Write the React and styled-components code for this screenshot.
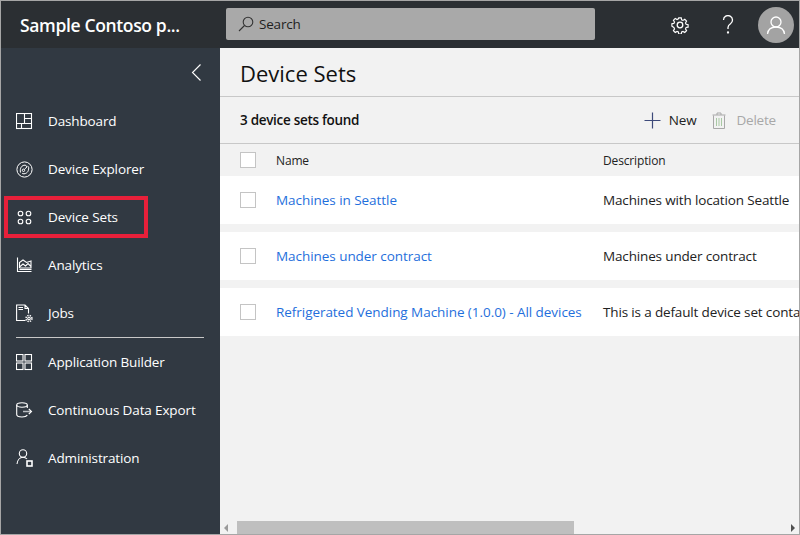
import React from 'react'
import styled, { createGlobalStyle } from 'styled-components'

const GlobalStyle = createGlobalStyle`
  html, body { margin: 0; padding: 0; height: 100%; overflow: hidden; }
  body { font-family: "Open Sans", "Noto Sans", sans-serif; background: #f2f2f2; }
  #root { height: 100%; }
`

const Page = styled.div`
  box-sizing: border-box;
  width: 800px;
  height: 535px;
  border: 1px solid #a6a6a6;
  display: flex;
  flex-direction: column;
  overflow: hidden;
`
const TopBar = styled.header`
  height: 47px;
  flex: none;
  background: #2b2f33;
  display: flex;
  align-items: center;
`
const Brand = styled.div`
  width: 225px;
  flex: none;
  box-sizing: border-box;
  padding-left: 19px;
  color: #fff;
  font-size: 17.5px;
  font-weight: 600;
  letter-spacing: -0.35px;
  white-space: nowrap;
`
const SearchBox = styled.div`
  width: 369px;
  height: 32px;
  margin-top: -1px;
  flex: none;
  background: #a9a9a9;
  border-radius: 2px;
  display: flex;
  align-items: center;
  gap: 5px;
  padding-left: 12px;
  padding-bottom: 1px;
  box-sizing: border-box;
  color: #1f1f1f;
  font-size: 13.5px;
  letter-spacing: -0.2px;
`
const TopIcons = styled.div`
  flex: 1;
  display: flex;
  align-items: center;
  justify-content: flex-end;
  padding-right: 5px;
`
const TopIcon = styled.button`
  all: unset;
  width: 48px;
  height: 47px;
  display: flex;
  align-items: center;
  justify-content: center;
`
const Avatar = styled.div`
  width: 36px;
  height: 36px;
  margin-left: 6px;
  border-radius: 50%;
  background: #a3a3a3;
  display: flex;
  align-items: center;
  justify-content: center;
`
const Body = styled.div`
  flex: 1;
  display: flex;
  min-height: 0;
`
const Sidebar = styled.nav`
  width: 219px;
  flex: none;
  background: #313942;
  position: relative;
`
const Collapse = styled.div`
  height: 49px;
  display: flex;
  align-items: center;
  justify-content: flex-end;
  padding-right: 18px;
`
const NavItem = styled.div`
  height: 48px;
  display: flex;
  align-items: center;
  gap: 15px;
  padding-left: 15px;
  color: #fff;
  font-size: 13.5px;
  letter-spacing: -0.13px;
  white-space: nowrap;
`
const NavIcon = styled.span`
  width: 17px;
  height: 20px;
  display: flex;
  align-items: center;
  justify-content: center;
`
const Divider = styled.hr`
  margin: 0 16px 0 15px;
  height: 1px;
  border: 0;
  background: #c8c8c8;
`
const Highlight = styled.div`
  position: absolute;
  left: 3px;
  top: 148px;
  width: 136px;
  height: 34px;
  border: 4px solid #e8203a;
`
const Main = styled.main`
  flex: 1;
  min-width: 0;
  background: #f2f2f2;
  display: flex;
  flex-direction: column;
  position: relative;
`
const Title = styled.h1`
  margin: 0;
  height: 49px;
  box-sizing: border-box;
  padding-left: 20px;
  font-size: 22px;
  font-weight: 400;
  line-height: 50px;
  color: #111;
  border-bottom: 1px solid #c8c8c8;
`
const Toolbar = styled.div`
  height: 47px;
  box-sizing: border-box;
  border-bottom: 1px solid #c8c8c8;
  display: flex;
  align-items: center;
  justify-content: space-between;
  padding: 0 23px 0 20px;
`
const Count = styled.div`
  font-size: 13.5px;
  font-weight: 600;
  letter-spacing: -0.3px;
  color: #111;
`
const Actions = styled.div`
  display: flex;
  align-items: center;
  gap: 16px;
`
const Action = styled.div`
  display: flex;
  align-items: center;
  gap: ${(p) => (p.$disabled ? '10px' : '8px')};
  font-size: 13.5px;
  letter-spacing: -0.2px;
  color: ${(p) => (p.$disabled ? '#a8a8a8' : '#222')};
`
const Row = styled.div`
  display: grid;
  grid-template-columns: 36px 327px 1fr;
  align-items: center;
  height: ${(p) => (p.$head ? '32px' : '48px')};
  padding-left: 20px;
  background: ${(p) => (p.$head ? 'transparent' : '#fff')};
  margin-bottom: ${(p) => (p.$head || p.$last ? '0' : '8px')};
  white-space: nowrap;
  overflow: hidden;
`
const Check = styled.span`
  display: block;
  box-sizing: border-box;
  width: 16px;
  height: 16px;
  background: #fff;
  border: 1px solid #c4c4c4;
`
const HeadCell = styled.span`
  font-size: 12px;
  letter-spacing: -0.15px;
  color: #222;
`
const NameLink = styled.a`
  font-size: 13.5px;
  letter-spacing: -0.05px;
  color: #1f6fdc;
`
const Desc = styled.span`
  font-size: 13.5px;
  letter-spacing: -0.15px;
  color: #222;
`
const Scrollbar = styled.div`
  position: absolute;
  left: 0;
  right: 0;
  bottom: 0;
  height: 13px;
  display: flex;
  align-items: center;
  justify-content: space-between;
  padding: 0 4px;
  box-sizing: border-box;
`
const Thumb = styled.div`
  position: absolute;
  left: 17px;
  top: 0;
  width: 337px;
  height: 13px;
  background: #bfbfbf;
`
const Arrow = styled.span`
  width: 0;
  height: 0;
  border-top: 4px solid transparent;
  border-bottom: 4px solid transparent;
  border-right: ${(p) => (p.$left ? '4px solid #9b9b9b' : '0')};
  border-left: ${(p) => (p.$left ? '0' : '4px solid #505050')};
`

const stroke = { fill: 'none', stroke: '#fff', strokeWidth: 1.1 }

const icons = {
  dashboard: (
    <svg width="17" height="17" viewBox="0 0 17 17" {...stroke}>
      <rect x=".5" y=".5" width="15" height="15" />
      <path d="M8.5 .5V10.5M8.5 5.5H15.5M.5 10.5H15.5M5.5 10.5V15.5" />
    </svg>
  ),
  explorer: (
    <svg width="17" height="17" viewBox="0 0 17 17" {...stroke} strokeWidth="1">
      <circle cx="8.5" cy="8.5" r="7.6" />
      <path d="M4.500 11.500C3.500 7 6 4 9 4.200c1.500.1 2 1.300 1.500 2.300M12.500 5.500c.8 3.500-.8 7-4.500 7.300-1 .1-1.700-.2-2-.8" />
      <circle cx="7.500" cy="9.300" r="1.200" />
      <path d="M8.400 8.400L11.500 5.300" />
    </svg>
  ),
  sets: (
    <svg width="17" height="17" viewBox="0 0 17 17" {...stroke}>
      <circle cx="4.500" cy="4.500" r="2.300" />
      <circle cx="12.500" cy="4.500" r="2.300" />
      <circle cx="4.500" cy="12.500" r="2.300" />
      <circle cx="12.500" cy="12.500" r="2.300" />
    </svg>
  ),
  analytics: (
    <svg width="17" height="17" viewBox="0 0 17 17" {...stroke}>
      <path d="M1.500 .5V14.500H15.500M3.500 12.500H15.500M3.500 11V5.500L7 3l3.500 2.500 4.500-1.500V11H3.500M3.500 10l3.500-3 2.500 2 2.500-2.500 3 3" />
    </svg>
  ),
  jobs: (
    <svg width="17" height="19" viewBox="0 0 17 19" {...stroke}>
      <path d="M9.500 16.500H.6V1H9l3.500 3.500V9.500M9 1V4.500H12.500M2.500 3.500H7M2.500 5.500H7" />
      <circle cx="13" cy="14.500" r="1.300" />
      <circle cx="13" cy="14.500" r="3" strokeDasharray="1.400 1" strokeWidth="1.400" />
    </svg>
  ),
  builder: (
    <svg width="17" height="17" viewBox="0 0 17 17" {...stroke}>
      <rect x=".5" y=".5" width="6.500" height="6.500" />
      <rect x="9" y=".5" width="6.500" height="6.500" />
      <rect x=".5" y="9" width="6.500" height="6.500" />
      <rect x="9" y="9" width="6.500" height="6.500" />
    </svg>
  ),
  exportData: (
    <svg width="17" height="17" viewBox="0 0 17 17" {...stroke}>
      <ellipse cx="6" cy="3" rx="5.300" ry="2.200" />
      <path d="M.7 3V12.500C.7 14 3 15 6 15S10.500 14.300 11.300 13M11.300 3V6" />
      <path d="M7 9.500H15" stroke="#b9bdc2" strokeWidth="1.500" />
      <path d="M12.800 7l2.700 2.500-2.700 2.500" />
    </svg>
  ),
  admin: (
    <svg width="17" height="18" viewBox="0 0 17 18" {...stroke} overflow="visible">
      <circle cx="7" cy="4.500" r="3.700" />
      <path d="M1 15c.4-3.500 2.600-6.700 6-6.700 1.700 0 3 .6 4 1.700" />
      <rect x="11" y="12" width="5" height="5" strokeWidth="1.600" />
    </svg>
  ),
}

const navTop = [
  ['dashboard', 'Dashboard'],
  ['explorer', 'Device Explorer'],
  ['sets', 'Device Sets'],
  ['analytics', 'Analytics'],
  ['jobs', 'Jobs'],
]
const navBottom = [
  ['builder', 'Application Builder'],
  ['exportData', 'Continuous Data Export'],
  ['admin', 'Administration'],
]
const deviceSets = [
  ['Machines in Seattle', 'Machines with location Seattle'],
  ['Machines under contract', 'Machines under contract'],
  ['Refrigerated Vending Machine (1.0.0) - All devices', 'This is a default device set containing all devices'],
]

const renderNav = ([icon, label]) => (
  <NavItem key={label}>
    <NavIcon>{icons[icon]}</NavIcon>
    {label}
  </NavItem>
)

const App = () => (
  <Page>
    <GlobalStyle />
    <TopBar>
      <Brand>Sample Contoso p...</Brand>
      <SearchBox>
        <svg width="16" height="16" viewBox="0 0 16 16" fill="none" stroke="#333" strokeWidth="1.100">
          <circle cx="10" cy="6" r="4.800" />
          <path d="M6.500 9.500L1 15" />
        </svg>
        Search
      </SearchBox>
      <TopIcons>
        <TopIcon>
          <svg width="18" height="18" viewBox="0 0 18 18" fill="none" stroke="#fff" strokeWidth="1.300">
            <circle cx="9" cy="9" r="2.800" />
            <path d="M7.600 1h2.800l.4 2.200 1.500.7 2-1.200 2 2-1.200 2 .7 1.500 2.200.4v2.800l-2.200.4-.7 1.500 1.200 2-2 2-2-1.200-1.500.7-.4 2.200H7.600l-.4-2.200-1.500-.7-2 1.200-2-2 1.200-2-.7-1.500L0 10.400V7.600l2.200-.4.7-1.500-1.200-2 2-2 2 1.200 1.500-.7z" transform="translate(.9 .9) scale(.9)" />
          </svg>
        </TopIcon>
        <TopIcon>
          <svg width="14" height="20" viewBox="0 0 14 20" fill="none" stroke="#fff" strokeWidth="1.300">
            <path d="M2.500 5a4.500 4.500 0 1 1 7 3.800c-1.500 1-2.500 1.800-2.500 3.700v1.500" />
            <circle cx="7" cy="17.500" r=".5" fill="#fff" />
          </svg>
        </TopIcon>
        <Avatar>
          <svg width="20" height="20" viewBox="0 0 20 20" fill="none" stroke="#fff" strokeWidth="1.300">
            <circle cx="10" cy="7" r="5" />
            <path d="M1.500 19c.5-4.500 4-7 8.500-7s8 2.500 8.500 7" />
          </svg>
        </Avatar>
      </TopIcons>
    </TopBar>
    <Body>
      <Sidebar>
        <Collapse>
          <svg width="11" height="17" viewBox="0 0 11 17" fill="none" stroke="#fff" strokeWidth="1.100">
            <path d="M9.500 .5L1.500 8.500l8 8" />
          </svg>
        </Collapse>
        {navTop.map(renderNav)}
        <Divider />
        {navBottom.map(renderNav)}
        <Highlight />
      </Sidebar>
      <Main>
        <Title>Device Sets</Title>
        <Toolbar>
          <Count>3 device sets found</Count>
          <Actions>
            <Action>
              <svg width="17" height="17" viewBox="0 0 17 17" fill="none" stroke="#3d4a7a" strokeWidth="1.200">
                <path d="M.5 8.500H16.500M8.500 .5V16.500" />
              </svg>
              New
            </Action>
            <Action $disabled>
              <svg width="14" height="17" viewBox="0 0 14 17" fill="none" stroke="#a8a8a8" strokeWidth="1">
                <path d="M1.500 3.500V16.500H12.500V3.500M.5 3H13.500M5 3V1H9V3" />
                <path d="M4.500 6V14M7 6V14M9.500 6V14" stroke="#a9c9a4" />
              </svg>
              Delete
            </Action>
          </Actions>
        </Toolbar>
        <Row $head>
          <Check />
          <HeadCell>Name</HeadCell>
          <HeadCell>Description</HeadCell>
        </Row>
        {deviceSets.map(([name, desc], i) => (
          <Row key={name} $last={i === deviceSets.length - 1}>
            <Check />
            <NameLink>{name}</NameLink>
            <Desc>{desc}</Desc>
          </Row>
        ))}
        <Scrollbar>
          <Arrow $left />
          <Thumb />
          <Arrow />
        </Scrollbar>
      </Main>
    </Body>
  </Page>
)

export default App
